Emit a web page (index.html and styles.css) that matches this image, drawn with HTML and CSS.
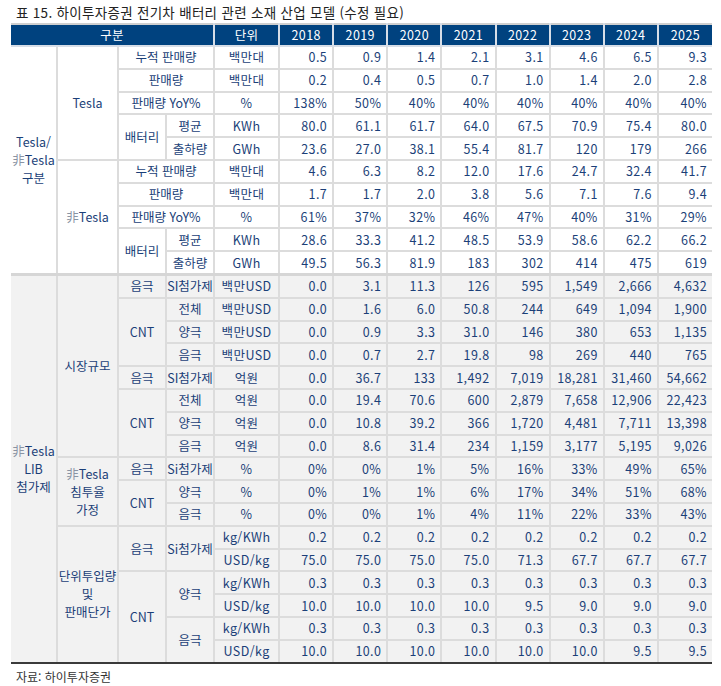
FILE: index.html
```html
<!DOCTYPE html>
<html lang="ko">
<head>
<meta charset="utf-8">
<link rel="stylesheet" href="styles.css">
</head>
<body>
<div class="title">표 15. 하이투자증권 전기차 배터리 관련 소재 산업 모델 (수정 필요)</div>
<table class="tbl">
<colgroup>
<col class="c1"><col class="c2"><col class="c3"><col class="c4"><col class="cu">
<col class="cy"><col class="cy"><col class="cy"><col class="cy"><col class="cy"><col class="cy"><col class="cy"><col class="cy">
</colgroup>
<thead>
<tr><th colspan="4">구분</th><th>단위</th><th>2018</th><th>2019</th><th>2020</th><th>2021</th><th>2022</th><th>2023</th><th>2024</th><th>2025</th></tr>
</thead>
<tbody class="sec1">
<tr><td class="lbl first ml" rowspan="10">Tesla/<br><span class="hj">非</span>Tesla<br>구분</td><td class="lbl" rowspan="5">Tesla</td><td class="lbl" colspan="2">누적 판매량</td><td class="u">백만대</td><td>0.5</td><td>0.9</td><td>1.4</td><td>2.1</td><td>3.1</td><td>4.6</td><td>6.5</td><td class="last">9.3</td></tr>
<tr><td class="lbl" colspan="2">판매량</td><td class="u">백만대</td><td>0.2</td><td>0.4</td><td>0.5</td><td>0.7</td><td>1.0</td><td>1.4</td><td>2.0</td><td class="last">2.8</td></tr>
<tr><td class="lbl" colspan="2">판매량 YoY%</td><td class="u">%</td><td>138%</td><td>50%</td><td>40%</td><td>40%</td><td>40%</td><td>40%</td><td>40%</td><td class="last">40%</td></tr>
<tr><td class="lbl" rowspan="2">배터리</td><td class="lbl">평균</td><td class="u">KWh</td><td>80.0</td><td>61.1</td><td>61.7</td><td>64.0</td><td>67.5</td><td>70.9</td><td>75.4</td><td class="last">80.0</td></tr>
<tr><td class="lbl">출하량</td><td class="u">GWh</td><td>23.6</td><td>27.0</td><td>38.1</td><td>55.4</td><td>81.7</td><td>120</td><td>179</td><td class="last">266</td></tr>
<tr><td class="lbl" rowspan="5"><span class="hj">非</span>Tesla</td><td class="lbl" colspan="2">누적 판매량</td><td class="u">백만대</td><td>4.6</td><td>6.3</td><td>8.2</td><td>12.0</td><td>17.6</td><td>24.7</td><td>32.4</td><td class="last">41.7</td></tr>
<tr><td class="lbl" colspan="2">판매량</td><td class="u">백만대</td><td>1.7</td><td>1.7</td><td>2.0</td><td>3.8</td><td>5.6</td><td>7.1</td><td>7.6</td><td class="last">9.4</td></tr>
<tr><td class="lbl" colspan="2">판매량 YoY%</td><td class="u">%</td><td>61%</td><td>37%</td><td>32%</td><td>46%</td><td>47%</td><td>40%</td><td>31%</td><td class="last">29%</td></tr>
<tr><td class="lbl" rowspan="2">배터리</td><td class="lbl">평균</td><td class="u">KWh</td><td>28.6</td><td>33.3</td><td>41.2</td><td>48.5</td><td>53.9</td><td>58.6</td><td>62.2</td><td class="last">66.2</td></tr>
<tr><td class="lbl">출하량</td><td class="u">GWh</td><td>49.5</td><td>56.3</td><td>81.9</td><td>183</td><td>302</td><td>414</td><td>475</td><td class="last">619</td></tr>
</tbody>
<tbody class="sec2">
<tr class="top"><td class="lbl first b ml" rowspan="17"><span class="hj">非</span>Tesla<br>LIB<br>첨가제</td><td class="lbl" rowspan="8">시장규모</td><td class="lbl">음극</td><td class="lbl">SI첨가제</td><td class="u">백만USD</td><td>0.0</td><td>3.1</td><td>11.3</td><td>126</td><td>595</td><td>1,549</td><td>2,666</td><td class="last">4,632</td></tr>
<tr><td class="lbl" rowspan="3">CNT</td><td class="lbl">전체</td><td class="u">백만USD</td><td>0.0</td><td>1.6</td><td>6.0</td><td>50.8</td><td>244</td><td>649</td><td>1,094</td><td class="last">1,900</td></tr>
<tr><td class="lbl">양극</td><td class="u">백만USD</td><td>0.0</td><td>0.9</td><td>3.3</td><td>31.0</td><td>146</td><td>380</td><td>653</td><td class="last">1,135</td></tr>
<tr><td class="lbl">음극</td><td class="u">백만USD</td><td>0.0</td><td>0.7</td><td>2.7</td><td>19.8</td><td>98</td><td>269</td><td>440</td><td class="last">765</td></tr>
<tr><td class="lbl">음극</td><td class="lbl">SI첨가제</td><td class="u">억원</td><td>0.0</td><td>36.7</td><td>133</td><td>1,492</td><td>7,019</td><td>18,281</td><td>31,460</td><td class="last">54,662</td></tr>
<tr><td class="lbl" rowspan="3">CNT</td><td class="lbl">전체</td><td class="u">억원</td><td>0.0</td><td>19.4</td><td>70.6</td><td>600</td><td>2,879</td><td>7,658</td><td>12,906</td><td class="last">22,423</td></tr>
<tr><td class="lbl">양극</td><td class="u">억원</td><td>0.0</td><td>10.8</td><td>39.2</td><td>366</td><td>1,720</td><td>4,481</td><td>7,711</td><td class="last">13,398</td></tr>
<tr><td class="lbl">음극</td><td class="u">억원</td><td>0.0</td><td>8.6</td><td>31.4</td><td>234</td><td>1,159</td><td>3,177</td><td>5,195</td><td class="last">9,026</td></tr>
<tr><td class="lbl ml" rowspan="3"><span class="hj">非</span>Tesla<br>침투율<br>가정</td><td class="lbl">음극</td><td class="lbl">Si첨가제</td><td class="u">%</td><td>0%</td><td>0%</td><td>1%</td><td>5%</td><td>16%</td><td>33%</td><td>49%</td><td class="last">65%</td></tr>
<tr><td class="lbl" rowspan="2">CNT</td><td class="lbl">양극</td><td class="u">%</td><td>0%</td><td>1%</td><td>1%</td><td>6%</td><td>17%</td><td>34%</td><td>51%</td><td class="last">68%</td></tr>
<tr><td class="lbl">음극</td><td class="u">%</td><td>0%</td><td>0%</td><td>1%</td><td>4%</td><td>11%</td><td>22%</td><td>33%</td><td class="last">43%</td></tr>
<tr><td class="lbl b ml" rowspan="6">단위투입량<br>및<br>판매단가</td><td class="lbl" rowspan="2">음극</td><td class="lbl" rowspan="2">Si첨가제</td><td class="u">kg/KWh</td><td>0.2</td><td>0.2</td><td>0.2</td><td>0.2</td><td>0.2</td><td>0.2</td><td>0.2</td><td class="last">0.2</td></tr>
<tr><td class="u">USD/kg</td><td>75.0</td><td>75.0</td><td>75.0</td><td>75.0</td><td>71.3</td><td>67.7</td><td>67.7</td><td class="last">67.7</td></tr>
<tr><td class="lbl b" rowspan="4">CNT</td><td class="lbl" rowspan="2">양극</td><td class="u">kg/KWh</td><td>0.3</td><td>0.3</td><td>0.3</td><td>0.3</td><td>0.3</td><td>0.3</td><td>0.3</td><td class="last">0.3</td></tr>
<tr><td class="u">USD/kg</td><td>10.0</td><td>10.0</td><td>10.0</td><td>10.0</td><td>9.5</td><td>9.0</td><td>9.0</td><td class="last">9.0</td></tr>
<tr><td class="lbl b" rowspan="2">음극</td><td class="u">kg/KWh</td><td>0.3</td><td>0.3</td><td>0.3</td><td>0.3</td><td>0.3</td><td>0.3</td><td>0.3</td><td class="last">0.3</td></tr>
<tr class="end"><td class="u">USD/kg</td><td>10.0</td><td>10.0</td><td>10.0</td><td>10.0</td><td>10.0</td><td>10.0</td><td>9.5</td><td class="last">9.5</td></tr>
</tbody>
</table>
<div class="src">자료: 하이투자증권</div>
</body>
</html>
```
FILE: styles.css
```css
html, body {
  margin: 0;
  padding: 0;
  background: #ffffff;
}
body {
  font-family: "Noto Sans CJK KR", "Noto Sans", sans-serif;
  color: #1b3f78;
}
.title {
  padding: 3px 0 0 16px;
  height: 20px;
  font-size: 13.5px;
  line-height: 18px;
  letter-spacing: 0.3px;
  color: #222222;
}
.tbl {
  margin-left: 11px;
  width: 701px;
  border-collapse: collapse;
  table-layout: fixed;
  font-size: 12.5px;
  border-top: 2px solid #cfcfcf;
}
.c1 { width: 46px; }
.c2 { width: 61px; }
.c3 { width: 48px; }
.c4 { width: 48px; }
.cu { width: 65px; }
.cy { width: 54.1px; }
.tbl th {
  background: #00427f;
  color: #ffffff;
  font-weight: normal;
  height: 20px;
  padding: 0;
  text-align: center;
  border: 2px solid #d6dde7;
  border-top: 0;
  line-height: 16px;
  letter-spacing: 0.4px;
}
.tbl th:first-child { border-left: 0; }
.tbl th:last-child { border-right: 0; }
.tbl td {
  border: 2px solid #dcdcdc;
  padding: 0 5px 0 0;
  height: 20.8px;
  text-align: right;
  white-space: nowrap;
  line-height: 16px;
  letter-spacing: 0.4px;
  color: #1b3f78;
}
.tbl td.lbl, .tbl td.u {
  text-align: center;
  padding: 0;
}
.tbl td.lbl { letter-spacing: 0; }
.tbl td.ml { line-height: 18px; }
.tbl td.first { border-left: 0; }
.tbl td.last { border-right: 0; }
.sec2 td { background: #f2f2f2; }
.sec2 tr.top td { border-top: 3px solid #d6d6d6; }
.tbl td.b, .sec2 tr.end td { border-bottom: 2px solid #3a3a3a; }
.hj { color: #8a94a4; }
.src {
  padding: 4px 0 0 16px;
  font-size: 12px;
  line-height: 18px;
  color: #333333;
}
```
